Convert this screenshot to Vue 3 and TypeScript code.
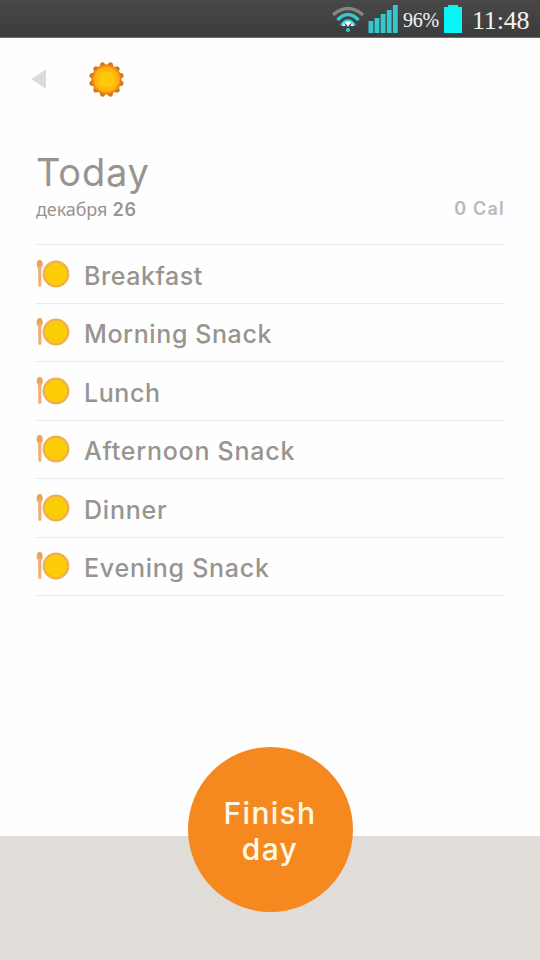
<style>
body {
  margin: 0;
  background: #fefefe;
}
</style>

<style scoped>
.screen {
  display: flex;
  flex-direction: column;
  width: 540px;
  height: 960px;
  overflow: hidden;
  background: #fefefe;
  color: #989490;
  font-family: Inter, 'Noto Sans', sans-serif;
}

.status-bar {
  display: flex;
  box-sizing: border-box;
  height: 38px;
  flex: none;
  justify-content: flex-end;
  align-items: center;
  padding-right: 11px;
  border-bottom: 1px solid #6d6d6d;
  background: linear-gradient(#484848, #3c3c3c);
  color: #f4f4f4;
  font-family: 'Liberation Serif', serif;
}

.status-icons {
  display: block;
  width: 68px;
  height: 37px;
}

.percent {
  width: 37px;
  margin-left: 3px;
  padding-top: 3px;
  font-size: 20px;
  letter-spacing: -0.2px;
  white-space: nowrap;
}

.battery {
  display: block;
  width: 18px;
  height: 37px;
  margin-left: 4px;
}

.clock {
  width: 57px;
  margin-left: 10px;
  padding-top: 4px;
  font-size: 26px;
  letter-spacing: -0.2px;
  white-space: nowrap;
}

.nav {
  display: flex;
  height: 82px;
  flex: none;
  align-items: center;
  padding-left: 31px;
}

.back {
  display: flex;
  padding: 0;
  border: 0;
  background: none;
}

.sun {
  margin-left: 41px;
}

.content {
  padding: 0 36px;
}

h1 {
  height: 53px;
  margin: 26px 0 0;
  font-size: 38px;
  font-weight: 400;
  line-height: 53px;
  letter-spacing: 0.8px;
}

.summary {
  display: flex;
  justify-content: space-between;
  height: 45px;
  font-size: 18px;
  font-weight: 600;
  line-height: 20px;
}

.date {
  letter-spacing: 0.7px;
}

.month {
  font-family: 'Noto Sans', sans-serif;
  font-weight: 400;
  letter-spacing: -0.1px;
}

.calories {
  color: #bbb8b5;
  letter-spacing: 1.2px;
  margin-right: -1px;
}

.meals {
  margin: 0;
  padding: 0;
  border-top: 1px solid #ebebeb;
  list-style: none;
}

.meal {
  display: flex;
  box-sizing: border-box;
  height: 58.5px;
  align-items: center;
  border-bottom: 1px solid #ebebeb;
  font-size: 25px;
  font-weight: 500;
}

.meal svg {
  width: 34px;
  height: 34px;
  flex: none;
  margin-right: 14px;
}

.meal span {
  padding-top: 4px;
  white-space: nowrap;
}

.footer {
  display: flex;
  height: 124px;
  justify-content: center;
  margin-top: auto;
  background: #e0ddd8;
}

.finish {
  width: 165px;
  height: 165px;
  margin-top: -89px;
  padding: 2px 0 0;
  border: 0;
  border-radius: 50%;
  background: #f58920;
  color: #fff9e8;
  font: 500 30px/36px Inter, sans-serif;
  letter-spacing: 1.3px;
}

.finish span {
  display: block;
}
</style>

<template>
  <main class="screen">
    <header class="status-bar">
      <svg class="status-icons" viewBox="0 0 68 37">
        <g fill="none" stroke-width="3.6">
          <path d="M1 15Q16 2 31 15" stroke="#858585" />
          <path d="M5.5 20Q16 9 26.5 20" stroke="#35c9cf" />
          <path d="M9.5 25.5Q16 16.5 22.5 25.5" stroke="#35c9cf" />
        </g>
        <path d="M12.5 21.5h7L16 27z" fill="#f4ffff" />
        <path d="m10 26 1.8-3.4 2 3.4zM18.2 26l2-3.4L22 26z" fill="#c9f5f5" />
        <circle cx="16" cy="30" r="2.1" fill="#35c9cf" />
        <rect
          v-for="(top, i) in signal"
          :key="top"
          :x="36.5 + i * 6.1"
          :y="top"
          width="4.8"
          :height="33 - top"
          fill="#35c9cf"
        />
      </svg>
      <span class="percent">96%</span>
      <svg class="battery" viewBox="0 0 18 37">
        <path d="M0 7h4V5h10v2h4v26H0z" fill="#08f5f8" />
      </svg>
      <time class="clock">11:48</time>
    </header>

    <nav class="nav">
      <button class="back" aria-label="Back">
        <svg width="16" height="20" viewBox="0 0 16 20">
          <path d="M0 10 14 1Q15 0 15 2v16q0 2-1 1z" fill="#dedbd6" />
        </svg>
      </button>
      <svg class="sun" width="37" height="37" viewBox="-18.5 -18.5 37 37">
        <g fill="#d3771c">
          <path
            v-for="n in 12"
            :key="n"
            d="M-3.6-13.5-1.7-17.2Q0-18 1.7-17.2L3.6-13.5z"
            :transform="`rotate(${n * 30 - 15})`"
          />
        </g>
        <circle r="15" fill="#ee7d14" />
        <circle r="13.7" fill="#ff9c0c" />
        <circle r="12" fill="#ffb90d" />
        <circle r="8" fill="#ffc90b" />
      </svg>
    </nav>

    <section class="content">
      <h1>Today</h1>
      <div class="summary">
        <span class="date"><span class="month">декабря</span> 26</span>
        <span class="calories">0 Cal</span>
      </div>
      <ul class="meals">
        <li v-for="meal in meals" :key="meal.name" class="meal">
          <svg viewBox="0 0 34 34">
            <ellipse cx="3.7" cy="7.3" rx="3" ry="4.3" fill="#e8a35d" />
            <path d="M2.1 9h3.4l-.2 20q-1.5 2.2-3 0z" fill="#efb077" />
            <circle cx="20" cy="17" r="12.2" fill="#fdcd08" stroke="#efb052" stroke-width="2.4" />
          </svg>
          <span :style="{ letterSpacing: `${meal.tracking}px` }">{{ meal.name }}</span>
        </li>
      </ul>
    </section>

    <footer class="footer">
      <button class="finish"><span>Finish</span><span>day</span></button>
    </footer>
  </main>
</template>

<script setup lang="ts">
interface Meal {
  name: string
  tracking: number
}

const signal: number[] = [21, 18, 14, 10, 5]

const meals: Meal[] = [
  { name: 'Breakfast', tracking: 0.55 },
  { name: 'Morning Snack', tracking: 0.6 },
  { name: 'Lunch', tracking: 0.6 },
  { name: 'Afternoon Snack', tracking: 0.75 },
  { name: 'Dinner', tracking: 0.8 },
  { name: 'Evening Snack', tracking: 0.75 }
]
</script>
